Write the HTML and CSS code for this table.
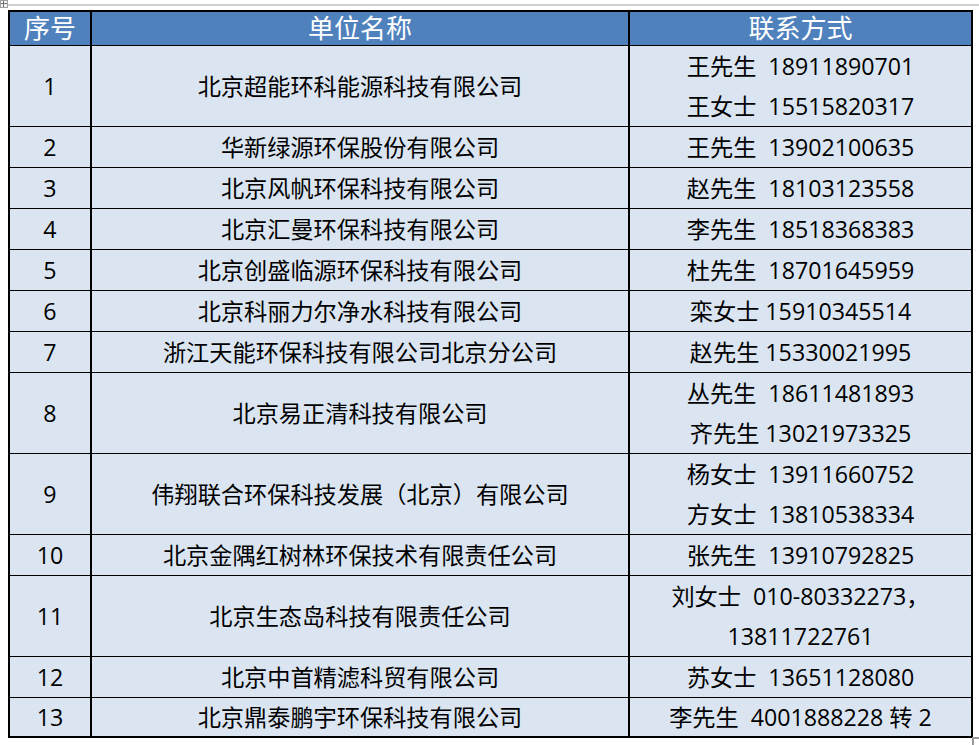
FILE: index.html
```html
<!DOCTYPE html>
<html lang="zh-CN">
<head>
<meta charset="utf-8">
<title>联系方式</title>
<link rel="stylesheet" href="styles.css">
</head>
<body>
<div class="page">
  <span class="move-handle"></span>
  <div class="ruler"></div>
  <table class="list">
    <colgroup>
      <col class="c-no">
      <col class="c-name">
      <col class="c-contact">
    </colgroup>
    <thead>
      <tr><th>序号</th><th>单位名称</th><th>联系方式</th></tr>
    </thead>
    <tbody>
      <tr><td>1</td><td>北京超能环科能源科技有限公司</td><td><span class="ln">王先生  18911890701</span><span class="ln">王女士  15515820317</span></td></tr>
      <tr><td>2</td><td>华新绿源环保股份有限公司</td><td><span class="ln">王先生  13902100635</span></td></tr>
      <tr><td>3</td><td>北京风帆环保科技有限公司</td><td><span class="ln">赵先生  18103123558</span></td></tr>
      <tr><td>4</td><td>北京汇曼环保科技有限公司</td><td><span class="ln">李先生  18518368383</span></td></tr>
      <tr><td>5</td><td>北京创盛临源环保科技有限公司</td><td><span class="ln">杜先生  18701645959</span></td></tr>
      <tr><td>6</td><td>北京科丽力尔净水科技有限公司</td><td><span class="ln">栾女士 15910345514</span></td></tr>
      <tr><td>7</td><td>浙江天能环保科技有限公司北京分公司</td><td><span class="ln">赵先生 15330021995</span></td></tr>
      <tr><td>8</td><td>北京易正清科技有限公司</td><td><span class="ln">丛先生  18611481893</span><span class="ln">齐先生 13021973325</span></td></tr>
      <tr><td>9</td><td>伟翔联合环保科技发展（北京）有限公司</td><td><span class="ln">杨女士  13911660752</span><span class="ln">方女士  13810538334</span></td></tr>
      <tr><td>10</td><td>北京金隅红树林环保技术有限责任公司</td><td><span class="ln">张先生  13910792825</span></td></tr>
      <tr><td>11</td><td>北京生态岛科技有限责任公司</td><td><span class="ln">刘女士  010-80332273，</span><span class="ln">13811722761</span></td></tr>
      <tr><td>12</td><td>北京中首精滤科贸有限公司</td><td><span class="ln">苏女士  13651128080</span></td></tr>
      <tr><td>13</td><td>北京鼎泰鹏宇环保科技有限公司</td><td><span class="ln">李先生  4001888228 转 2</span></td></tr>
    </tbody>
  </table>
  <span class="resize-handle"></span>
</div>
</body>
</html>
```

FILE: styles.css
```css
html, body {
  margin: 0;
  padding: 0;
  background: #ffffff;
}

.page {
  position: relative;
  width: 979px;
  height: 745px;
  overflow: hidden;
  padding-top: 4px;
  box-sizing: border-box;
}

.ruler {
  margin-left: 8px;
  height: 0;
  border-top: 2px solid #cfcfcf;
}

.move-handle {
  position: absolute;
  left: 0;
  top: 0;
  width: 6px;
  height: 6px;
  border: 1px solid #a0a0a0;
  background: #f4f4f4;
}

.move-handle::before,
.move-handle::after {
  content: "";
  position: absolute;
  background: #707070;
}

.move-handle::before {
  left: 2px;
  top: 0;
  width: 1px;
  height: 6px;
}

.move-handle::after {
  left: 0;
  top: 2px;
  width: 6px;
  height: 1px;
}

.resize-handle {
  position: absolute;
  left: 972px;
  top: 737px;
  width: 7px;
  height: 8px;
  border-left: 2px solid #9a9a9a;
  border-top: 2px solid #9a9a9a;
  box-sizing: border-box;
}

.list {
  margin: 4px 0 0 8px;
  width: 963px;
  border-collapse: collapse;
  table-layout: fixed;
  font-family: "Open Sans", "Noto Sans CJK SC", sans-serif;
  color: #000000;
}

.c-no { width: 82px; }
.c-name { width: 538px; }
.c-contact { width: 343px; }

.list th,
.list td {
  border-top: 1px solid #000000;
  border-bottom: 1px solid #000000;
  border-left: 2px solid #000000;
  border-right: 2px solid #000000;
  padding: 0;
  text-align: center;
  vertical-align: middle;
}

.list th {
  background: #4f81bd;
  color: #ffffff;
  font-weight: normal;
  font-size: 26px;
  line-height: 33px;
  height: 33px;
  border-top-width: 2px;
}

.list td {
  background: #dbe5f1;
  font-size: 23.2px;
  line-height: 40px;
  white-space: pre;
}

.list tbody tr:last-child td {
  border-bottom-width: 2px;
  line-height: 38px;
}

.ln {
  display: block;
}
```
